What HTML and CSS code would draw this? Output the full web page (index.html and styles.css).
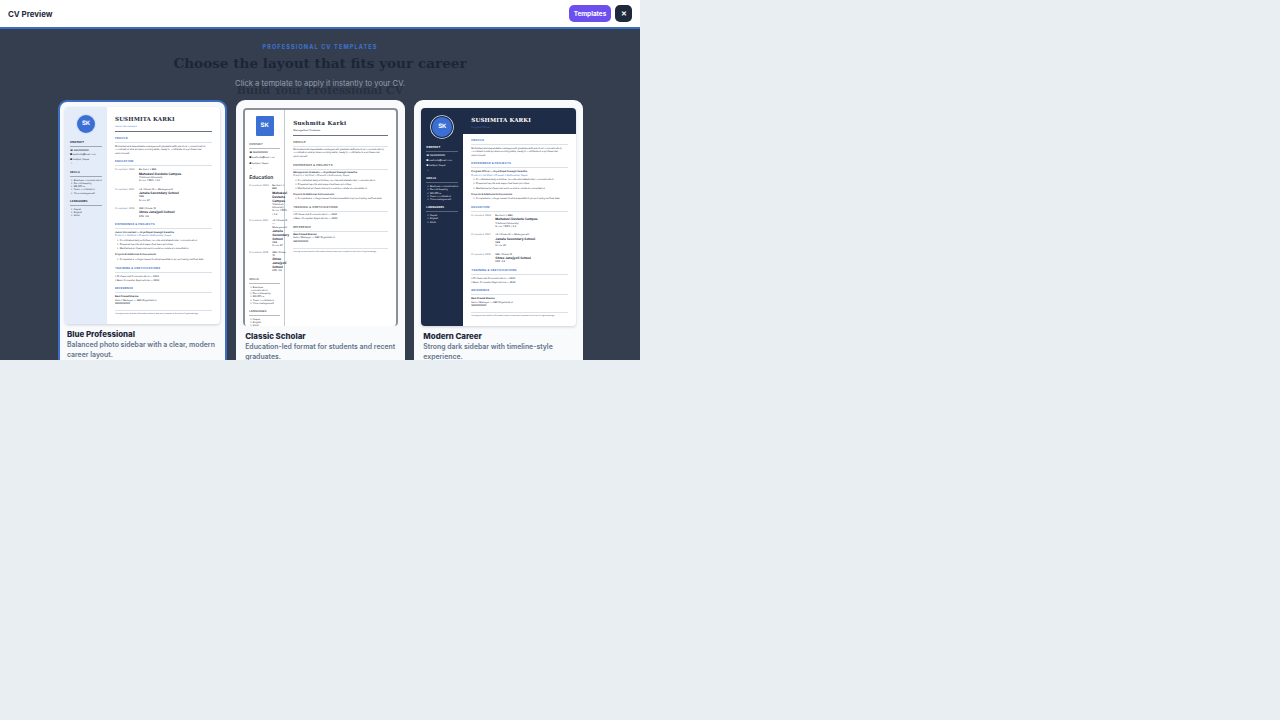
FILE: index.html
```html
<!DOCTYPE html>
<html lang="en">
  <head>
    <meta charset="UTF-8" />
    <meta name="viewport" content="width=device-width, initial-scale=1.0" />
    <title>CV Preview</title>
    <link rel="stylesheet" href="styles.css">
  </head>
  <body>
    <div class="preview">
      <div class="topbar">
        <div class="topbar-title">CV Preview</div>
        <div class="topbar-actions">
          <button class="btn-templates">Templates</button>
          <button class="btn-close">&#10005;</button>
        </div>
      </div>

      <div class="overlay">
        <div class="ghost-title">Build Your Professional CV</div>

        <div class="picker-head">
          <div class="eyebrow">PROFESSIONAL CV TEMPLATES</div>
          <h1>Choose the layout that fits your career</h1>
          <p>Click a template to apply it instantly to your CV.</p>
        </div>

        <div class="template-grid">
          <!-- blue professional -->
          <div class="template-card active">
            <div class="thumb thumb-blue">
              <div class="cv-side">
                <div class="cv-avatar">SK</div>
                <div class="side-title">CONTACT</div>
                <div class="side-line">&#9742; 9840000000</div>
                <div class="side-line">&#9632; sushmita@mail.com</div>
                <div class="side-line">&#9679; Lalitpur, Nepal</div>
                <div class="side-line">&#8594;</div>
                <div class="side-title">SKILLS</div>
                <ul class="side-list">
                  <li>Business communication</li>
                  <li>Record keeping</li>
                  <li>MS Office</li>
                  <li>Team coordination</li>
                  <li>Time management</li>
                </ul>
                <div class="side-title">LANGUAGES</div>
                <ul class="side-list">
                  <li>Nepali</li>
                  <li>English</li>
                  <li>Hindi</li>
                </ul>
              </div>
              <div class="cv-main">
                <div class="cv-head">
                  <div class="cv-name">SUSHMITA KARKI</div>
                  <div class="cv-role">Junior Accountant</div>
                </div>
                <div class="sec-title">PROFILE</div>
                <p class="cv-text">Motivated and dependable management graduate with practical communication, coordination and problem-solving skills, ready to contribute in a professional environment.</p>
                <div class="sec-title">EDUCATION</div>
                <div class="edu-row">
                  <div class="edu-date">Completed: 2024</div>
                  <div class="edu-body">Bachelor &bull; BBA<b>Mahakavi Devkota Campus</b>Tribhuvan University<br>Score: 7.60% / 3.4</div>
                </div>
                <div class="edu-row">
                  <div class="edu-date">Completed: 2021</div>
                  <div class="edu-body">+2 / Grade 12 &mdash; Management<b>Janata Secondary School</b>NEB<br>Score: 87</div>
                </div>
                <div class="edu-row">
                  <div class="edu-date">Completed: 2018</div>
                  <div class="edu-body">SEE / Grade 10<b>Shree Janajyoti School</b>GPA: 3.8</div>
                </div>
                <div class="sec-title">EXPERIENCE &amp; PROJECTS</div>
                <div class="job-title">Junior Accountant &mdash; Arya Nepal Sewagih Swastha</div>
                <div class="job-meta">Position &bull; 1st Chair &bull; Present &bull; Kathmandu, Nepal</div>
                <ul class="cv-list">
                  <li>Coordinated daily activities, records and stakeholder communication.</li>
                  <li>Prepared reports and supported team priorities.</li>
                  <li>Maintained professional service and accurate documentation.</li>
                </ul>
                <div class="job-title">Projects &amp; Additional Achievements</div>
                <ul class="cv-list">
                  <li>Completed a college research and presentation project using verified data.</li>
                </ul>
                <div class="sec-title">TRAINING &amp; CERTIFICATIONS</div>
                <div class="cv-plain">&bull; Professional Communication &mdash; 2023</div>
                <div class="cv-plain">&bull; Basic Computer Applications &mdash; 2022</div>
                <div class="sec-title">REFERENCE</div>
                <div class="ref-block"><b>Ram Prasad Sharma</b><br>Senior Manager &mdash; ABC Organization<br>9800000000</div>
                <div class="cv-foot">I hereby declare that the information above is true and complete to the best of my knowledge.</div>
              </div>
            </div>
            <div class="card-title">Blue Professional</div>
            <div class="card-desc">Balanced photo sidebar with a clear, modern career layout.</div>
          </div>

          <!-- classic scholar -->
          <div class="template-card">
            <div class="thumb thumb-classic">
              <div class="cv-side">
                <div class="cv-avatar">SK</div>
                <div class="side-title">CONTACT</div>
                <div class="side-line">&#9742; 9840000000</div>
                <div class="side-line">&#9632; sushmita@mail.com</div>
                <div class="side-line">&#9679; Lalitpur, Nepal</div>
                <div class="side-line">&#8594;</div>
                <div class="side-heading">Education</div>
                <div class="edu-row">
                  <div class="edu-date">Completed: 2024</div>
                  <div class="edu-body">Bachelor &bull; BBA<b>Mahakavi Devkota Campus</b>Tribhuvan University<br>Score: 7.60% / 3.4</div>
                </div>
                <div class="edu-row">
                  <div class="edu-date">Completed: 2021</div>
                  <div class="edu-body">+2 / Grade 12 &mdash; Management<b>Janata Secondary School</b>NEB<br>Score: 87</div>
                </div>
                <div class="edu-row">
                  <div class="edu-date">Completed: 2018</div>
                  <div class="edu-body">SEE / Grade 10<b>Shree Janajyoti School</b>GPA: 3.8</div>
                </div>
                <div class="side-title">SKILLS</div>
                <ul class="side-list">
                  <li>Business communication</li>
                  <li>Record keeping</li>
                  <li>MS Office</li>
                  <li>Team coordination</li>
                  <li>Time management</li>
                </ul>
                <div class="side-title">LANGUAGES</div>
                <ul class="side-list">
                  <li>Nepali</li>
                  <li>English</li>
                  <li>Hindi</li>
                </ul>
              </div>
              <div class="cv-main">
                <div class="cv-head">
                  <div class="cv-name">Sushmita Karki</div>
                  <div class="cv-role">Management Graduate</div>
                </div>
                <div class="sec-title">PROFILE</div>
                <p class="cv-text">Motivated and dependable management graduate with practical communication, coordination and problem-solving skills, ready to contribute in a professional environment.</p>
                <div class="sec-title">EXPERIENCE &amp; PROJECTS</div>
                <div class="job-title">Management Graduate &mdash; Arya Nepal Sewagih Swastha</div>
                <div class="job-meta">Position &bull; 1st Chair &bull; Present &bull; Kathmandu, Nepal</div>
                <ul class="cv-list">
                  <li>Coordinated daily activities, records and stakeholder communication.</li>
                  <li>Prepared reports and supported team priorities.</li>
                  <li>Maintained professional service and accurate documentation.</li>
                </ul>
                <div class="job-title">Projects &amp; Additional Achievements</div>
                <ul class="cv-list">
                  <li>Completed a college research and presentation project using verified data.</li>
                </ul>
                <div class="sec-title">TRAINING &amp; CERTIFICATIONS</div>
                <div class="cv-plain">&bull; Professional Communication &mdash; 2023</div>
                <div class="cv-plain">&bull; Basic Computer Applications &mdash; 2022</div>
                <div class="sec-title">REFERENCE</div>
                <div class="ref-block"><b>Ram Prasad Sharma</b><br>Senior Manager &mdash; ABC Organization<br>9800000000</div>
                <div class="cv-foot">I hereby declare that the information above is true and complete to the best of my knowledge.</div>
              </div>
            </div>
            <div class="card-title">Classic Scholar</div>
            <div class="card-desc">Education-led format for students and recent graduates.</div>
          </div>

          <!-- modern career -->
          <div class="template-card">
            <div class="thumb thumb-modern">
              <div class="cv-side">
                <div class="cv-avatar">SK</div>
                <div class="side-title">CONTACT</div>
                <div class="side-line">&#9742; 9840000000</div>
                <div class="side-line">&#9632; sushmita@mail.com</div>
                <div class="side-line">&#9679; Lalitpur, Nepal</div>
                <div class="side-line">&#8594;</div>
                <div class="side-title">SKILLS</div>
                <ul class="side-list">
                  <li>Business communication</li>
                  <li>Record keeping</li>
                  <li>MS Office</li>
                  <li>Team coordination</li>
                  <li>Time management</li>
                </ul>
                <div class="side-title">LANGUAGES</div>
                <ul class="side-list">
                  <li>Nepali</li>
                  <li>English</li>
                  <li>Hindi</li>
                </ul>
              </div>
              <div class="cv-main">
                <div class="cv-head">
                  <div class="cv-name">SUSHMITA KARKI</div>
                  <div class="cv-role">Program Officer</div>
                </div>
                <div class="sec-title">PROFILE</div>
                <p class="cv-text">Motivated and dependable management graduate with practical communication, coordination and problem-solving skills, ready to contribute in a professional environment.</p>
                <div class="sec-title">EXPERIENCE &amp; PROJECTS</div>
                <div class="job-title">Program Officer &mdash; Arya Nepal Sewagih Swastha</div>
                <div class="job-meta">Position &bull; 1st Chair &bull; Present &bull; Kathmandu, Nepal</div>
                <ul class="cv-list">
                  <li>Coordinated daily activities, records and stakeholder communication.</li>
                  <li>Prepared reports and supported team priorities.</li>
                  <li>Maintained professional service and accurate documentation.</li>
                </ul>
                <div class="job-title">Projects &amp; Additional Achievements</div>
                <ul class="cv-list">
                  <li>Completed a college research and presentation project using verified data.</li>
                </ul>
                <div class="sec-title">EDUCATION</div>
                <div class="edu-row">
                  <div class="edu-date">Completed: 2024</div>
                  <div class="edu-body">Bachelor &bull; BBA<b>Mahakavi Devkota Campus</b>Tribhuvan University<br>Score: 7.60% / 3.4</div>
                </div>
                <div class="edu-row">
                  <div class="edu-date">Completed: 2021</div>
                  <div class="edu-body">+2 / Grade 12 &mdash; Management<b>Janata Secondary School</b>NEB<br>Score: 87</div>
                </div>
                <div class="edu-row">
                  <div class="edu-date">Completed: 2018</div>
                  <div class="edu-body">SEE / Grade 10<b>Shree Janajyoti School</b>GPA: 3.8</div>
                </div>
                <div class="sec-title">TRAINING &amp; CERTIFICATIONS</div>
                <div class="cv-plain">&bull; Professional Communication &mdash; 2023</div>
                <div class="cv-plain">&bull; Basic Computer Applications &mdash; 2022</div>
                <div class="sec-title">REFERENCE</div>
                <div class="ref-block"><b>Ram Prasad Sharma</b><br>Senior Manager &mdash; ABC Organization<br>9800000000</div>
                <div class="cv-foot">I hereby declare that the information above is true and complete to the best of my knowledge.</div>
              </div>
            </div>
            <div class="card-title">Modern Career</div>
            <div class="card-desc">Strong dark sidebar with timeline-style experience.</div>
          </div>
        </div>
      </div>
    </div>
  </body>
</html>
```

FILE: styles.css
```css
body {
  font-family: Inter, "Liberation Sans", sans-serif;
  margin: 0;
  padding: 0;
  background-color: #e9eef3;
}

.preview {
  width: 640px;
  height: 360px;
  overflow: hidden;
  display: flex;
  flex-direction: column;
}

.topbar {
  height: 27px;
  flex-shrink: 0;
  display: flex;
  justify-content: space-between;
  align-items: center;
  padding: 0 8px;
  background: #fff;
  border-bottom: 2px solid #3b6fc4;
}

.topbar-title {
  font-size: 7.9px;
  font-weight: 700;
  color: #1e293b;
}

.topbar-actions {
  display: flex;
  gap: 4px;
}

.topbar-actions button {
  height: 17px;
  border: none;
  border-radius: 5px;
  color: #fff;
  font-family: inherit;
  font-weight: 700;
  padding: 0;
}

.btn-templates {
  width: 42px;
  background: #6d4ff0;
  font-size: 6.4px;
}

.btn-close {
  width: 17px;
  background: #1e293b;
  font-size: 7px;
}

.overlay {
  flex: 1;
  position: relative;
  overflow: hidden;
  background: #343e4e;
  padding-top: 15px;
}

.ghost-title {
  position: absolute;
  top: 55px;
  left: 0;
  right: 0;
  text-align: center;
  font-family: "DejaVu Serif", serif;
  font-size: 11px;
  font-weight: 700;
  color: #273040;
  filter: blur(0.4px);
}

.picker-head {
  position: relative;
  text-align: center;
  height: 56px;
}

.eyebrow {
  font-size: 5.6px;
  line-height: 6px;
  font-weight: 700;
  letter-spacing: 1.1px;
  color: #3f74d0;
}

.picker-head h1 {
  margin: 3px 0 0;
  font-family: "DejaVu Serif", serif;
  font-size: 13.6px;
  line-height: 20px;
  font-weight: 700;
  color: #1c2537;
}

.picker-head p {
  margin: 6px 0 0;
  font-size: 7.65px;
  line-height: 10px;
  color: #929cab;
}

.template-grid {
  position: relative;
  display: grid;
  grid-template-columns: repeat(3, 168.67px);
  gap: 9.5px;
  margin-left: 58px;
}

.template-card {
  box-sizing: border-box;
  height: 290px;
  background: #f8fafc;
  border-radius: 9px;
  padding: 8px 7px;
}

.template-card.active {
  padding: 5px;
  border: 2px solid #3b6fc4;
}

.thumb {
  height: 218px;
  display: flex;
  overflow: hidden;
  background: #fff;
  border-radius: 4px;
  box-shadow: 0 1px 3px rgba(15, 23, 42, 0.18);
  font-size: 2.4px;
  line-height: 3.3px;
  color: #1e293b;
  text-rendering: geometricPrecision;
}

.active .thumb {
  height: 217px;
}

.card-title {
  margin-top: 5px;
  padding-left: 2px;
  font-size: 7.9px;
  line-height: 10px;
  font-weight: 800;
  color: #1e293b;
}

.card-desc {
  margin-top: 1px;
  padding-left: 2px;
  font-size: 6.9px;
  line-height: 9.5px;
  font-weight: 600;
  color: #64748b;
}

/* cv thumbnail, shared parts */
.cv-side {
  width: 42px;
  flex-shrink: 0;
  box-sizing: border-box;
  padding: 8px 5px 0;
  background: #e3ecf8;
}

.cv-avatar {
  width: 18px;
  height: 18px;
  margin: 0 auto 8px;
  border-radius: 50%;
  background: #3b6fd4;
  box-shadow: 0 0 0 1px #cfe0f8;
  color: #fff;
  font-size: 6px;
  font-weight: 700;
  line-height: 18px;
  text-align: center;
}

.side-title {
  margin: 5px 0 2px;
  padding-bottom: 1.5px;
  border-bottom: 0.5px solid #9aa8bb;
  font-size: 2.7px;
  line-height: 3.5px;
  font-weight: 700;
  letter-spacing: 0.1px;
}

.side-line {
  margin-bottom: 1.2px;
  line-height: 3.3px;
  white-space: nowrap;
}

.side-list {
  margin: 0 0 4px;
  padding-left: 1px;
  list-style: none;
  line-height: 3.2px;
}

.side-list li::before,
.cv-list li::before {
  content: "\2022\00a0\00a0";
}

.cv-main {
  flex: 1;
  min-width: 0;
  padding: 10px 8px 0;
}

.cv-head {
  padding-bottom: 2px;
  border-bottom: 0.7px solid #6b7280;
}

.cv-name {
  font-family: "DejaVu Serif", serif;
  font-size: 5.6px;
  line-height: 7px;
  font-weight: 700;
  letter-spacing: 0.1px;
  color: #1e293b;
}

.cv-role {
  margin-top: 1px;
  font-size: 2.5px;
  line-height: 4px;
  color: #3b6fc4;
}

.sec-title {
  margin: 4.5px 0 2px;
  padding-bottom: 1.5px;
  border-bottom: 0.5px solid #dbe1e8;
  font-size: 2.8px;
  line-height: 3.5px;
  font-weight: 700;
  letter-spacing: 0.2px;
  color: #3b6fc4;
}

.cv-text {
  margin: 0;
  font-size: 2.4px;
  line-height: 3.8px;
}

.edu-row {
  display: flex;
  margin-bottom: 5px;
}

.edu-date {
  width: 24px;
  flex-shrink: 0;
  color: #64748b;
  white-space: nowrap;
}

.edu-body {
  font-size: 2.4px;
  line-height: 3.3px;
}

.edu-body b {
  display: block;
  font-size: 3.2px;
  line-height: 4.4px;
}

.job-title {
  margin-top: 1.5px;
  font-weight: 600;
}

.job-meta {
  color: #3b6fc4;
}

.cv-list {
  margin: 1px 0 1px;
  padding-left: 2px;
  list-style: none;
  line-height: 4.4px;
}

.cv-plain {
  line-height: 4.2px;
}

.ref-block {
  line-height: 3.3px;
}

.cv-foot {
  margin-top: 5px;
  padding-top: 2px;
  border-top: 0.5px solid #dbe1e8;
  font-size: 1.9px;
}

/* classic scholar */
.thumb-classic {
  box-sizing: border-box;
  border: 2px solid #8b8f96;
  border-bottom: none;
  box-shadow: none;
}

.thumb-classic .cv-side {
  width: 40px;
  padding: 6px 4px 0;
  background: #fff;
  border-right: 0.7px solid #c4c9d0;
}

.thumb-classic .cv-avatar {
  border-radius: 1px;
  box-shadow: none;
  margin-bottom: 7px;
  height: 20px;
  line-height: 20px;
}

.thumb-classic .side-title {
  color: #333;
  font-weight: 500;
  border-bottom: 0.5px solid #bbb;
}

.thumb-classic .side-line {
  margin-bottom: 2px;
}

.thumb-classic .side-heading {
  margin: 5px 0 3px;
  font-size: 5px;
  line-height: 6px;
  font-weight: 600;
}

.thumb-classic .edu-date {
  width: 23px;
}

.thumb-classic .edu-body b {
  font-size: 3.2px;
  line-height: 4px;
}

.thumb-classic .edu-row {
  margin-bottom: 3.2px;
}

.thumb-classic .cv-main {
  padding-top: 11px;
}

.thumb-classic .cv-name {
  letter-spacing: 0.3px;
}

.thumb-classic .cv-role {
  color: #1e293b;
}

.thumb-classic .sec-title {
  margin-bottom: 1.2px;
  color: #333;
  font-weight: 500;
}

.thumb-classic .cv-list {
  line-height: 4.2px;
}

.thumb-classic .job-meta {
  color: #475569;
}

/* modern career */
.thumb-modern .cv-side {
  background: #1e2c47;
  color: #f1f5f9;
  padding-top: 9px;
}

.thumb-modern .cv-avatar {
  box-shadow: 0 0 0 1px #1e2c47, 0 0 0 1.8px #dbe6f7;
  width: 20px;
  height: 20px;
  line-height: 20px;
  margin-bottom: 9px;
}

.thumb-modern .side-line {
  margin-bottom: 1.7px;
}

.thumb-modern .side-title {
  color: #fff;
  border-bottom-color: #56647c;
}

.thumb-modern .cv-main {
  padding: 0 8px;
}

.thumb-modern .cv-head {
  margin: 0 -8px 0;
  padding: 10px 8px 0;
  height: 26px;
  box-sizing: border-box;
  background: #1e2c47;
  border-bottom: none;
}

.thumb-modern .cv-name {
  color: #fff;
}
```
